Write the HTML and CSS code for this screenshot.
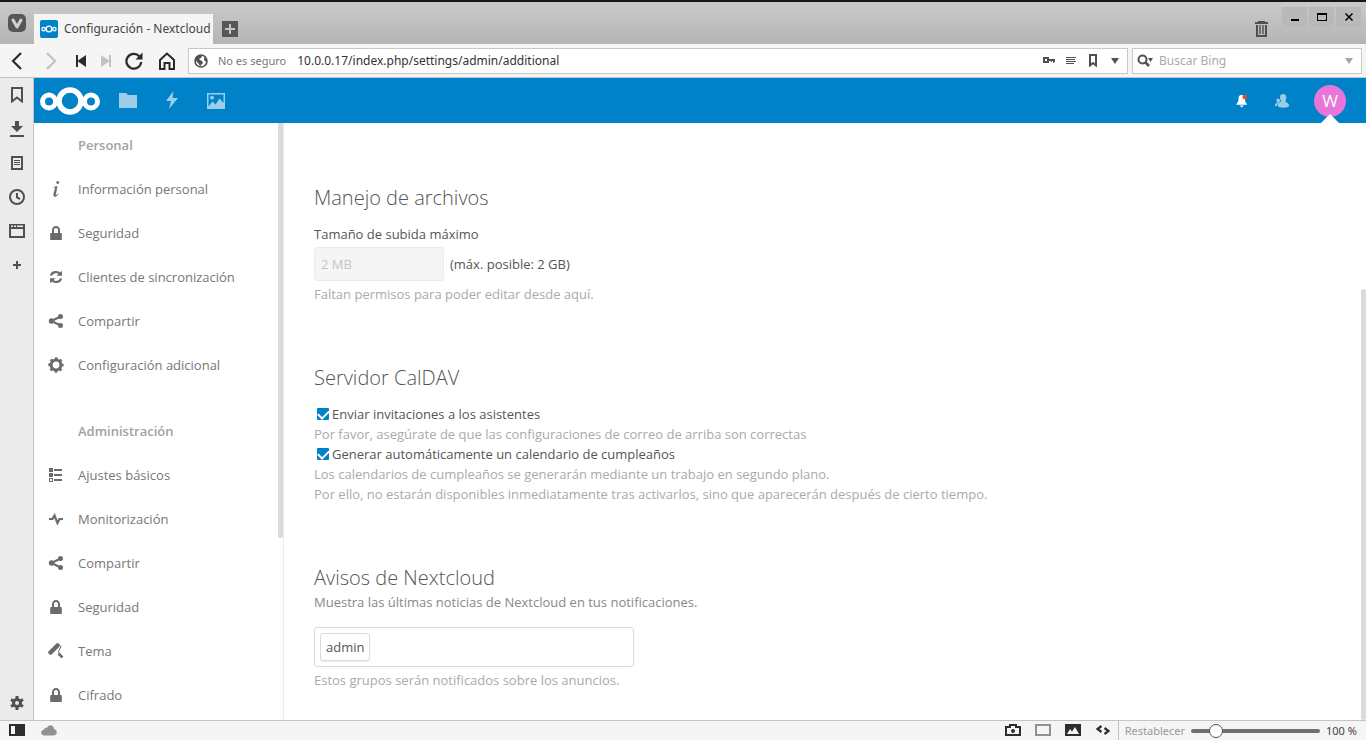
FILE: index.html
```html
<!DOCTYPE html>
<html lang="es">
<head>
<meta charset="utf-8">
<title>Configuración - Nextcloud</title>
<link rel="stylesheet" href="styles.css">
</head>
<body>
<svg class="sprite" aria-hidden="true">
  <symbol id="lock" viewBox="0 0 16 16"><path d="M8 1C5.600 1 4 2.700 4 5v3H3v0a.8.800 0 0 0-.8.800V15h11.600V8.800A.8.800 0 0 0 13 8h-1V5c0-2.300-1.600-4-4-4zm0 2c1.300 0 2 .8 2 2v3H6V5c0-1.200.7-2 2-2z"/></symbol>
  <symbol id="share" viewBox="0 0 16 16"><path d="M3.500 8 12.500 3.500M3.500 8l9 4.500" stroke="currentColor" stroke-width="2"/><circle cx="3.500" cy="8" r="2.700"/><circle cx="12.500" cy="3.500" r="2.500"/><circle cx="12.500" cy="12.500" r="2.500"/></symbol>
  <symbol id="rings" viewBox="0 0 62 28"><g fill="none" stroke="#fff"><circle cx="31" cy="14" r="11" stroke-width="5.500"/><circle cx="10" cy="14.500" r="6.500" stroke-width="5"/><circle cx="52" cy="14.500" r="6.500" stroke-width="5"/></g></symbol>
</svg>

<header class="tabs">
  <button class="vivaldi" aria-label="Menú de Vivaldi"><svg width="20" height="20" viewBox="0 0 20 20"><rect x="1" y="1" width="18" height="18" rx="5" fill="#575757"/><path d="m6 7 4 7 4-7" fill="none" stroke="#d2d2d2" stroke-width="3" stroke-linecap="round" stroke-linejoin="round"/></svg></button>
  <div class="tab"><span class="favicon"><svg width="16" height="8"><use href="#rings"/></svg></span><span>Configuración - Nextcloud</span></div>
  <button class="newtab" aria-label="Nueva pestaña"><svg width="16" height="16" viewBox="0 0 16 16"><path fill="#575757" d="M0 0h16v16H0z"/><path stroke="#c4c4c4" stroke-width="2" d="M8 3v10M3 8h10"/></svg></button>
  <button class="trash" aria-label="Pestañas cerradas"><svg width="13" height="16" viewBox="0 0 13 16"><path fill="#505050" d="M3 0h7v1h3v2H0V1h3zM1 4h11v12H1zm2 0v10h7V4z" fill-rule="evenodd"/><path stroke="#606060" stroke-width="1.600" d="M5 4v9M8 4v9"/></svg></button>
  <div class="window-buttons">
    <button aria-label="Minimizar"><svg width="14" height="14"><path fill="#000" d="M3 9h8v2H3z"/></svg></button>
    <button aria-label="Maximizar"><svg width="14" height="14"><path fill="#000" d="M2 3h10v8H2zm1 2v5h8V5z" fill-rule="evenodd"/></svg></button>
    <button aria-label="Cerrar"><svg width="14" height="14"><path stroke="#000" stroke-width="1.500" d="m3.500 3.500 7 7m0-7-7 7"/></svg></button>
  </div>
</header>

<div class="toolbar">
  <button class="tool wide" aria-label="Atrás"><svg width="20" height="20" viewBox="0 0 20 20"><path d="m14 2-8 8 8 8" fill="none" stroke="currentColor" stroke-width="2.200"/></svg></button>
  <button class="tool wide" disabled aria-label="Adelante"><svg width="20" height="20" viewBox="0 0 20 20"><path d="m6 2 8 8-8 8" fill="none" stroke="currentColor" stroke-width="2.200"/></svg></button>
  <button class="tool" aria-label="Rebobinar"><svg width="12" height="12" viewBox="0 0 12 12"><path d="M1 0h2v5.500L11 0v12L3 6.500V12H1z"/></svg></button>
  <button class="tool" disabled aria-label="Avance rápido"><svg width="12" height="12" viewBox="0 0 12 12"><path d="M11 0H9v5.500L1 0v12l8-5.500V12h2z"/></svg></button>
  <button class="tool reload" aria-label="Recargar"><svg width="18" height="18" viewBox="0 0 18 18"><path d="M14.500 4.500A7.400 7.400 0 1 0 16.200 10" fill="none" stroke="currentColor" stroke-width="2.200"/><path d="M17.500.5v7h-7z"/></svg></button>
  <button class="tool wide" aria-label="Inicio"><svg width="18" height="18" viewBox="0 0 18 18"><path d="M2 17V8l7-6.500L16 8v9h-4.500v-6h-5v6z" fill="none" stroke="currentColor" stroke-width="2"/></svg></button>
  <div class="address">
    <svg width="14" height="14" viewBox="0 0 14 14"><circle cx="7" cy="7" r="6" fill="none" stroke="currentColor" stroke-width="1.600"/><path d="M2 3 6 1l2 1-1 2-2 1 1 1 2 1 1 2-2 2-1 2-1-3-2-2-2-2zm8 0 3 3-1 2-2-2z"/></svg>
    <span class="insecure">No es seguro</span>
    <input class="url" aria-label="Dirección" value="10.0.0.17/index.php/settings/admin/additional">
    <button class="mini" aria-label="Contraseñas"><svg width="12" height="7" viewBox="0 0 12 7"><path d="M0 0h6v2h6v3h-1v1h-1V4H9v1H8V4H6v2H0zm2 2v2h2V2z" fill-rule="evenodd"/></svg></button>
    <button class="mini" aria-label="Modo lectura"><svg width="12" height="8" viewBox="0 0 12 8"><path d="M1 0h10v1H1zm0 2h9v1H1zm0 2h10v1H1zm0 2h8v1H1z"/></svg></button>
    <button class="mini" aria-label="Añadir marcador"><svg width="8" height="13"><path d="M1 1h6v10.500L4 9l-3 2.500z" fill="none" stroke="currentColor" stroke-width="2"/></svg></button>
    <button class="mini" aria-label="Historial de direcciones"><svg width="8" height="6"><path d="M0 0h8L4 6z"/></svg></button>
  </div>
  <div class="search">
    <svg width="17" height="14" viewBox="0 0 17 14"><circle cx="5.500" cy="5.500" r="4" fill="none" stroke="currentColor" stroke-width="2"/><path d="m8 8 4 4" stroke="currentColor" stroke-width="2.500"/><path d="M11 4h5l-2.500 4z"/></svg>
    <input aria-label="Buscar" placeholder="Buscar Bing">
    <button class="mini pale" aria-label="Buscadores"><svg width="8" height="6"><path d="M0 0h8L4 6z"/></svg></button>
  </div>
</div>

<div class="middle">
  <aside class="panel">
    <button aria-label="Marcadores"><svg width="12" height="16"><path d="M1 1h10v13.500l-5-4-5 4z" fill="none" stroke="currentColor" stroke-width="2"/></svg></button>
    <button aria-label="Descargas"><svg width="16" height="18" viewBox="0 0 16 18"><path d="M6 1h4v5h4l-6 6-6-6h4zM1 15h14v2H1z"/></svg></button>
    <button aria-label="Notas"><svg width="12" height="14" viewBox="0 0 12 14"><path d="M1 1h10v12H1z" fill="none" stroke="currentColor" stroke-width="2"/><path d="M3 4h6v1H3zm0 2h6v1H3zm0 2h6v1H3z"/></svg></button>
    <button aria-label="Historial"><svg width="16" height="16" viewBox="0 0 16 16"><path d="M8 4v4.500l3 1.500" fill="none" stroke="currentColor" stroke-width="2"/><circle cx="8" cy="8" r="7" fill="none" stroke="currentColor" stroke-width="2"/></svg></button>
    <button aria-label="Ventanas"><svg width="16" height="14" viewBox="0 0 16 14"><path d="M0 0h16v14H0zm2 1.500V3h2V1.500zm3 0V3h2V1.500zm3 0V3h6V1.500zM2 5v7h12V5z" fill-rule="evenodd"/></svg></button>
    <button aria-label="Añadir panel web"><svg width="8" height="8"><path d="M3 0h2v3h3v2H5v3H3V5H0V3h3z"/></svg></button>
    <button class="bottom" aria-label="Ajustes"><svg width="14" height="14" viewBox="0 0 14 14"><circle cx="7" cy="7" r="3.500" fill="none" stroke="currentColor" stroke-width="3"/><path d="M7 0v3m0 8v3M1 3.500 3.500 5m7 4 2.500 1.500M13 3.500 10.500 5m-7 4L1 10.500" stroke="currentColor" stroke-width="3"/></svg></button>
  </aside>

  <div class="page">
    <header class="cloudbar">
      <a href="#" aria-label="Nextcloud" class="logo"><svg width="62" height="28"><use href="#rings"/></svg></a>
      <a href="#" class="app" aria-label="Archivos"><svg width="18" height="16" viewBox="0 0 18 16"><path d="M0 0h7l2 2h9v13H0z"/></svg></a>
      <a href="#" class="app" aria-label="Actividad"><svg width="14" height="20" viewBox="0 0 14 20"><path d="m8.500 0-7.500 10h5l-2 8 9-11H7.500z"/></svg></a>
      <a href="#" class="app" aria-label="Galería"><svg width="18" height="16" viewBox="0 0 18 16"><path d="M0 0h18v16H0zm1.500 1.500v12l4-5 3 3 4-6 4 4.500V1.500z" fill-rule="evenodd"/><circle cx="5" cy="4.700" r="1.900"/></svg></a>
      <a href="#" class="app bell" aria-label="Notificaciones"><svg width="12" height="14" viewBox="0 0 12 14"><path fill="#fff" d="M5.500 1C3 1 2.500 3 2.500 5 2.500 8 1.500 8.500.5 10v.8h10.500V10C9.500 8.500 9 8 9 5 9 2 8 1 5.500 1zM3.500 11.500h4.500l-2.200 1.900z"/><circle cx="8.800" cy="3" r="2.300" fill="#f04a10"/></svg></a>
      <a href="#" class="app contacts" aria-label="Contactos"><svg width="14" height="14" viewBox="0 0 14 14"><path d="M8 0C6 0 5 1.300 5 3.200c0 1.800.8 2.800 1 3.800 0 1.200-3 1.500-3 3.500V12c0 2.200 11 2.200 11 0v-1c0-2-3.500-2.500-3.500-4 .2-1 .8-2 .8-3.800C11.300 1.300 10 0 8 0zM3.200 4.500C1.800 4.500 1.300 5.500 1.500 6.500L2 8.500C1.700 9.500 0 9.300 0 10.800V12h2.300v-1.500C2.300 9 4.300 8.500 4.800 7.500v-2z"/></svg></a>
      <button class="avatar">W</button>
    </header>
    <div class="body">
      <nav class="nav">
        <h3>Personal</h3>
        <ul>
          <li><a href="#"><svg viewBox="0 0 16 16"><path d="M9.700 0a1.500 1.500 0 1 0 .1 3 1.500 1.500 0 0 0-.1-3zM9.500 5 5.500 6v.6l1.600.2L5.500 13c-.5 2.300.5 3 2 2.700 1.200-.3 2.200-1.500 2.800-2.700l-.5-.4c-.7 1-1.500 1.800-2 1.500-.2-.3 0-.8.200-1.400z"/></svg>Información personal</a></li>
          <li><a href="#"><svg><use href="#lock"/></svg>Seguridad</a></li>
          <li><a href="#"><svg viewBox="0 0 16 16"><path d="M3 6.500C3.700 3 9.500 1.500 12 5M13 9.500C12.300 13 6.500 14.500 4 11" fill="none" stroke="currentColor" stroke-width="2.200"/><path d="M14 1.800v5H8.500zM2 14.200v-5h5.500z"/></svg>Clientes de sincronización</a></li>
          <li><a href="#"><svg><use href="#share"/></svg>Compartir</a></li>
          <li><a href="#"><svg viewBox="0 0 16 16"><circle cx="8" cy="8" r="4.900" fill="none" stroke="currentColor" stroke-width="3"/><circle cx="8" cy="8" r="6.700" fill="none" stroke="currentColor" stroke-width="2" stroke-dasharray="2.630 2.630" stroke-dashoffset="1.300"/></svg>Configuración adicional</a></li>
        </ul>
        <h3>Administración</h3>
        <ul>
          <li><a href="#"><svg viewBox="0 0 16 16"><path d="M1 1h4v4H1zm0 5h4v4H1zm0 5h4v4H1zm1 1v2h2v-2zM6 2h8v2H6zm0 5h8v2H6zm0 5h8v2H6z" fill-rule="evenodd"/></svg>Ajustes básicos</a></li>
          <li><a href="#"><svg viewBox="0 0 16 16"><path d="M1 8h3.500L6.500 4.500l3 7.500L11.500 8H15" fill="none" stroke="currentColor" stroke-width="2.200"/></svg>Monitorización</a></li>
          <li><a href="#"><svg><use href="#share"/></svg>Compartir</a></li>
          <li><a href="#"><svg><use href="#lock"/></svg>Seguridad</a></li>
          <li><a href="#"><svg viewBox="0 0 16 16"><path d="m2.500 9.500 7-7" stroke="currentColor" stroke-width="4.500" stroke-linecap="round"/><path d="m11 1.500 2 2-2.500 5 1 2" fill="none" stroke="currentColor"/><path d="m10.500 10.500 4 4" stroke="currentColor" stroke-width="2.500"/></svg>Tema</a></li>
          <li><a href="#"><svg><use href="#lock"/></svg>Cifrado</a></li>
        </ul>
        <span class="thumb"></span>
      </nav>
      <main class="content">
        <section>
          <h2>Manejo de archivos</h2>
          <label class="block" for="upload">Tamaño de subida máximo</label>
          <div class="upload"><input id="upload" value="2 MB" disabled><span>(máx. posible: 2 GB)</span></div>
          <p class="hint upload-hint">Faltan permisos para poder editar desde aquí.</p>
        </section>
        <section>
          <h2>Servidor CalDAV</h2>
          <label class="check"><input type="checkbox" checked>Enviar invitaciones a los asistentes</label>
          <p class="hint">Por favor, asegúrate de que las configuraciones de correo de arriba son correctas</p>
          <label class="check"><input type="checkbox" checked>Generar automáticamente un calendario de cumpleaños</label>
          <p class="hint">Los calendarios de cumpleaños se generarán mediante un trabajo en segundo plano.<br>Por ello, no estarán disponibles inmediatamente tras activarlos, sino que aparecerán después de cierto tiempo.</p>
        </section>
        <section>
          <h2 class="tight">Avisos de Nextcloud</h2>
          <p class="description">Muestra las últimas noticias de Nextcloud en tus notificaciones.</p>
          <div class="groups"><span class="chip">admin</span><input aria-label="Grupos"></div>
          <p class="hint groups-hint">Estos grupos serán notificados sobre los anuncios.</p>
        </section>
        <span class="thumb"></span>
      </main>
    </div>
  </div>
</div>

<footer class="status">
  <button aria-label="Panel lateral"><svg width="16" height="12" viewBox="0 0 16 12"><path d="M0 0h16v12H0zm2 2v8h4V2z" fill-rule="evenodd"/></svg></button>
  <button class="grey" aria-label="Sincronización"><svg width="16" height="11" viewBox="0 0 16 11"><path d="M3.500 10.500C-.8 10.500-.8 5 3 4.700 3.500 3 5 2.500 6 3c1-3.500 6.500-4 7 1 4 1 3.600 6.500-.5 6.500z"/></svg></button>
  <button class="first-right" aria-label="Captura"><svg width="16" height="12" viewBox="0 0 16 12"><path d="M4 0h8v2h4v10H0V2h4zm2 2v2H2v6h12V4h-4V2z" fill-rule="evenodd"/><circle cx="8" cy="7" r="2"/></svg></button>
  <button class="grey" aria-label="Mosaico"><svg width="16" height="12"><path d="M1 1h14v10H1z" fill="none" stroke="currentColor" stroke-width="2"/></svg></button>
  <button aria-label="Imágenes"><svg width="16" height="12"><path d="M0 0h16v12H0z"/><path d="m2 10 3-5 2 2.500L10 3l4 7z" fill="#f5f5f5"/></svg></button>
  <button aria-label="Acciones de página"><svg width="14" height="10" viewBox="0 0 14 10"><path d="M5.500 1 1.500 4l4 3m3-4 4 3-4 3" fill="none" stroke="currentColor" stroke-width="2.200"/></svg></button>
  <div class="zoom">
    <button class="reset">Restablecer</button>
    <input type="range" aria-label="Zoom" min="0" max="100" value="16">
    <span class="level">100 %</span>
  </div>
</footer>
</body>
</html>
```

FILE: styles.css
```css
* { box-sizing: border-box; }
body {
  margin: 0;
  height: 100vh;
  display: flex;
  flex-direction: column;
  overflow: hidden;
  font: 12px/20px "Noto Sans", sans-serif;
  color: #444;
  background: #fff;
}
svg { display: block; fill: currentColor; flex: none; }
.sprite { position: absolute; width: 0; height: 0; }
button {
  display: flex;
  align-items: center;
  justify-content: center;
  flex: none;
  padding: 0;
  border: 0;
  background: none;
  color: inherit;
  font: inherit;
}
input { font: inherit; color: inherit; min-width: 0; }
a { color: inherit; text-decoration: none; }
h2, h3, p, ul { margin: 0; padding: 0; }

.tabs {
  display: flex;
  align-items: flex-end;
  height: 44px;
  flex: none;
  border-top: 2px solid #15171a;
  background: linear-gradient(#cacaca, #b5b5b5);
}
.vivaldi { width: 34px; height: 42px; }
.tab {
  display: flex;
  align-items: center;
  gap: 6px;
  height: 30px;
  padding: 0 2px 0 6px;
  background: #f5f5f5;
}
.favicon {
  display: grid;
  place-items: center;
  width: 18px;
  height: 18px;
  border-radius: 2px;
  background: #0082c9;
}
.newtab { width: 34px; height: 30px; }
.trash { margin-left: auto; width: 30px; height: 30px; }
.window-buttons {
  display: flex;
  align-self: flex-start;
  gap: 2px;
  margin: 5px 5px 0 6px;
}
.window-buttons button { width: 25px; height: 20px; background: #b9b9b9; }

.toolbar {
  display: flex;
  align-items: center;
  height: 34px;
  flex: none;
  padding-right: 4px;
  border-bottom: 1px solid #c4c4c4;
  background: #f5f5f5;
}
.tool { width: 25px; height: 32px; color: #2a2a2a; }
.tool.wide { width: 34px; }
.tool.reload { width: 32px; }
.tool:disabled { color: #c2c2c2; }
.address, .search {
  display: flex;
  align-items: center;
  height: 26px;
  margin-left: 4px;
  border: 1px solid #c8c8c8;
  background: #fff;
}
.address { flex: 1; padding: 0 1px 0 5px; color: #505050; }
.address input, .search input { flex: 1; border: 0; padding: 0; background: none; outline: 0; }
.insecure { margin: 0 11px 0 10px; color: #777; font-size: 11px; }
.address .url { color: #333; }
.mini { width: 22px; height: 24px; }
.mini.pale { color: #a5a5a5; }
.search { width: 230px; padding: 0 1px 0 4px; color: #505050; }
.search input { margin-left: 5px; }
.search input::placeholder { color: #aaa; }

.middle { flex: 1; min-height: 0; display: flex; }
.panel {
  display: flex;
  flex-direction: column;
  width: 34px;
  flex: none;
  border-right: 1px solid #c4c4c4;
  background: #ebebeb;
  color: #505050;
}
.panel button { height: 34px; width: 33px; }
.panel .bottom { margin-top: auto; }

.page {
  flex: 1;
  min-width: 0;
  display: flex;
  flex-direction: column;
  font: 13px/20px "Open Sans", sans-serif;
}
.cloudbar {
  display: flex;
  align-items: center;
  height: 45px;
  flex: none;
  padding-right: 20px;
  background: #0082c9;
  color: #99cde9;
}
.logo { margin: 0 5px; }
.app { display: grid; place-items: center; width: 44px; height: 44px; }
.bell { margin-left: auto; width: 40px; }
.contacts { width: 40px; }
.avatar {
  position: relative;
  width: 32px;
  height: 32px;
  margin-left: 12px;
  border-radius: 50%;
  background: #e875d8;
  color: #fff;
  font-size: 17px;
  font-weight: 500;
}
.avatar::after {
  content: "";
  position: absolute;
  left: 6px;
  bottom: -7px;
  border: 10px solid transparent;
  border-top: 0;
  border-bottom-color: #fff;
}
.body { flex: 1; min-height: 0; display: flex; }
.nav {
  position: relative;
  width: 250px;
  flex: none;
  overflow: hidden;
  border-right: 1px solid #ebebeb;
  color: #777;
}
.nav h3 {
  padding-left: 44px;
  font-size: 13px;
  font-weight: 600;
  line-height: 44px;
  color: #a2a2a2;
}
.nav ul { list-style: none; }
.nav ul + h3 { margin-top: 22px; }
.nav a { display: flex; align-items: center; gap: 14px; height: 44px; padding-left: 14px; }
.nav svg { width: 16px; height: 16px; color: #6b6b6b; }
.thumb { position: absolute; right: 0; width: 5px; background: #dbdbdb; }
.nav .thumb { top: 0; height: 415px; border-radius: 0 0 2px 2px; }

.content { position: relative; flex: 1; min-width: 0; overflow: hidden; padding-top: 31px; color: #555; }
.content .thumb { top: 166px; bottom: 0; border-radius: 2px; }
.content section { padding: 30px; }
.content h2 { margin-bottom: 12px; font-size: 20px; line-height: 28px; font-weight: 300; }
.content h2.tight { margin-bottom: 0; }
.block { display: block; margin-bottom: 3px; }
.hint { color: #aaa; }
.description { color: #888; }
.upload { display: flex; align-items: center; gap: 6px; }
.upload input {
  width: 130px;
  height: 34px;
  padding: 0 6px;
  border: 1px solid #ebebeb;
  border-radius: 3px;
  background: #f5f5f5;
  color: #c5c5c5;
}
.upload-hint, .groups-hint { margin-top: 3px; }
.check { display: flex; align-items: center; gap: 3px; padding-left: 3px; }
.check input {
  appearance: none;
  display: grid;
  justify-items: center;
  align-items: start;
  width: 12px;
  height: 12px;
  margin: 0;
  border-radius: 1px;
  background: #0082c9;
}
.check input:checked::before {
  content: "";
  width: 9px;
  height: 5px;
  margin-top: 2px;
  border: solid #fff;
  border-width: 0 0 2px 2px;
  transform: rotate(-45deg);
}
.groups {
  display: flex;
  align-items: center;
  width: 320px;
  height: 40px;
  margin-top: 15px;
  padding: 5px;
  border: 1px solid #dbdbdb;
  border-radius: 3px;
}
.groups input { flex: 1; border: 0; outline: 0; }
.chip {
  padding: 3px 5px;
  border: 1px solid #dbdbdb;
  border-radius: 3px;
  box-shadow: 0 1px 1px #eee;
}

.status {
  display: flex;
  align-items: center;
  height: 20px;
  flex: none;
  border-top: 1px solid #c4c4c4;
  background: #f5f5f5;
  color: #2d2d2d;
  font-size: 11px;
}
.status > button { width: 30px; height: 19px; padding-bottom: 1px; }
.status > button:first-child { width: 34px; }
.status .grey { color: #919191; }
.status .first-right { margin-left: auto; }
.zoom {
  display: flex;
  align-items: center;
  gap: 6px;
  height: 19px;
  padding: 0 6px;
  border-left: 1px solid #c4c4c4;
  color: #444;
}
.zoom .reset { color: #999; }
.zoom .level { width: 34px; }
.zoom input { appearance: none; width: 129px; height: 16px; margin: 0; background: none; }
.zoom input::-webkit-slider-runnable-track { height: 4px; border-radius: 2px; background: #707070; }
.zoom input::-webkit-slider-thumb {
  appearance: none;
  width: 14px;
  height: 14px;
  margin-top: -5px;
  border: 1px solid #555;
  border-radius: 50%;
  background: #fff;
}
```
